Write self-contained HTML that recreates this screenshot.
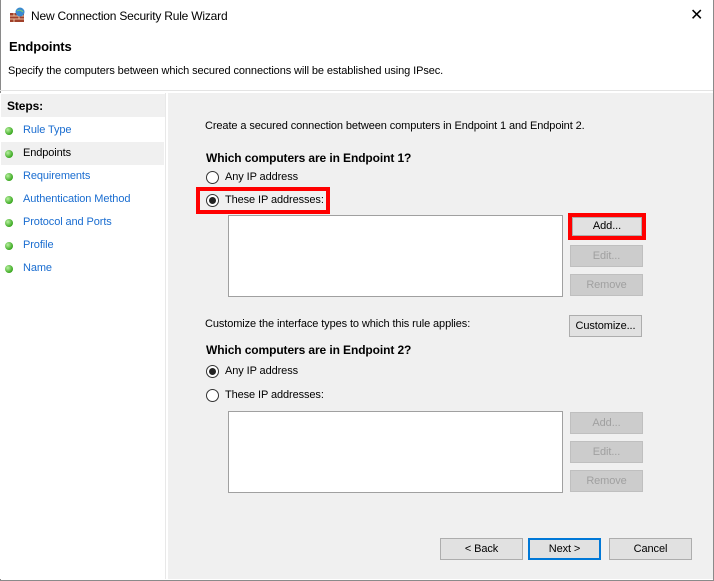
<!DOCTYPE html>
<html><head><style>
*{margin:0;padding:0;box-sizing:border-box}
body{width:714px;height:581px;position:relative;background:#fff;font-family:"Liberation Sans",sans-serif;font-size:11px;letter-spacing:-0.1px;color:#000;overflow:hidden}
.a{position:absolute;white-space:nowrap}
.b{font-weight:bold;font-size:12px;letter-spacing:-0.1px}
.btn{position:absolute;background:#e1e1e1;border:1px solid #adadad;text-align:center;line-height:20px;height:22px}
.dis{background:#cccccc;border-color:#bfbfbf;color:#a0a0a0}
.radio{position:absolute;width:13px;height:13px;border:1px solid #333;border-radius:50%;background:#fff}
.radio.on::after{content:"";position:absolute;left:2px;top:2px;width:7px;height:7px;border-radius:50%;background:#222}
.box{position:absolute;background:#fff;border:1px solid #a0a0a0}
.dot{position:absolute;left:5px;width:8px;height:8px;border-radius:50%;background:radial-gradient(circle at 35% 35%,#b8f0a0,#3aa820 70%)}
.step{position:absolute;left:23px;color:#1a6dd0}
</style></head><body>
<div class="a" style="left:0;top:0;width:714px;height:581px;border:1px solid #8a8a8a;border-top:none"></div>
<svg class="a" style="left:9px;top:7px" width="18" height="16"><rect x="1" y="6" width="14" height="9" fill="#a0402a"/><path d="M1 9h14M1 12h14M5 6v3M10 9v3M5 12v3" stroke="#e8c0a0" stroke-width="1"/><circle cx="11" cy="5" r="4.5" fill="#3a8ad0"/><path d="M8 4q3 -2 6 1" stroke="#7c7" fill="none"/></svg>
<div class="a" style="left:31px;top:9px;font-size:12px;letter-spacing:-0.2px">New Connection Security Rule Wizard</div>
<div class="a" style="left:690px;top:5px;font-size:16px">✕</div>
<div class="a" style="left:9px;top:39px;font-size:13px;font-weight:bold">Endpoints</div>
<div class="a" style="left:8px;top:65px">Specify the computers between which secured connections will be established using IPsec.</div>
<div class="a" style="left:0;top:90px;width:713px;height:1px;background:#e3e3e3"></div>
<div class="a" style="left:0;top:93px;width:166px;height:486px;background:#fff;border-right:1px solid #e8e8e8"></div>
<div class="a" style="left:1px;top:94px;width:164px;height:23px;background:#f0f0f0"></div>
<div class="a b" style="left:7px;top:99px">Steps:</div>
<div class="a" style="left:1px;top:142px;width:163px;height:23px;background:#f0f0f0"></div>
<div class="dot" style="top:127px"></div><div class="step" style="top:124px">Rule Type</div>
<div class="dot" style="top:150px"></div><div class="step" style="top:147px;color:#000">Endpoints</div>
<div class="dot" style="top:173px"></div><div class="step" style="top:170px">Requirements</div>
<div class="dot" style="top:196px"></div><div class="step" style="top:193px">Authentication Method</div>
<div class="dot" style="top:219px"></div><div class="step" style="top:216px">Protocol and Ports</div>
<div class="dot" style="top:242px"></div><div class="step" style="top:239px">Profile</div>
<div class="dot" style="top:265px"></div><div class="step" style="top:262px">Name</div>
<div class="a" style="left:168px;top:93px;width:545px;height:486px;background:#f0f0f0"></div>
<div class="a" style="left:205px;top:120px">Create a secured connection between computers in Endpoint 1 and Endpoint 2.</div>
<div class="a b" style="left:206px;top:151px">Which computers are in Endpoint 1?</div>
<div class="radio" style="left:206px;top:171px"></div><div class="a" style="left:225px;top:171px">Any IP address</div>
<div class="a" style="left:196px;top:187px;width:134px;height:27px;border:4px solid #f00"></div>
<div class="radio on" style="left:206px;top:194px"></div><div class="a" style="left:225px;top:194px">These IP addresses:</div>
<div class="box" style="left:228px;top:215px;width:335px;height:82px"></div>
<div class="a" style="left:568px;top:213px;width:78px;height:27px;border:4px solid #f00"></div>
<div class="btn" style="left:572px;top:217px;width:70px;height:19px;line-height:17px">Add...</div>
<div class="btn dis" style="left:570px;top:245px;width:73px">Edit...</div>
<div class="btn dis" style="left:570px;top:274px;width:73px">Remove</div>
<div class="a" style="left:205px;top:318px">Customize the interface types to which this rule applies:</div>
<div class="btn" style="left:569px;top:315px;width:73px">Customize...</div>
<div class="a b" style="left:206px;top:343px">Which computers are in Endpoint 2?</div>
<div class="radio on" style="left:206px;top:365px"></div><div class="a" style="left:225px;top:365px">Any IP address</div>
<div class="radio" style="left:206px;top:389px"></div><div class="a" style="left:225px;top:389px">These IP addresses:</div>
<div class="box" style="left:228px;top:411px;width:335px;height:82px"></div>
<div class="btn dis" style="left:570px;top:412px;width:73px">Add...</div>
<div class="btn dis" style="left:570px;top:441px;width:73px">Edit...</div>
<div class="btn dis" style="left:570px;top:470px;width:73px">Remove</div>
<div class="btn" style="left:440px;top:538px;width:83px">&lt; Back</div>
<div class="btn" style="left:528px;top:538px;width:73px;border:2px solid #0078d7;line-height:18px">Next &gt;</div>
<div class="btn" style="left:609px;top:538px;width:83px">Cancel</div>
</body></html>
